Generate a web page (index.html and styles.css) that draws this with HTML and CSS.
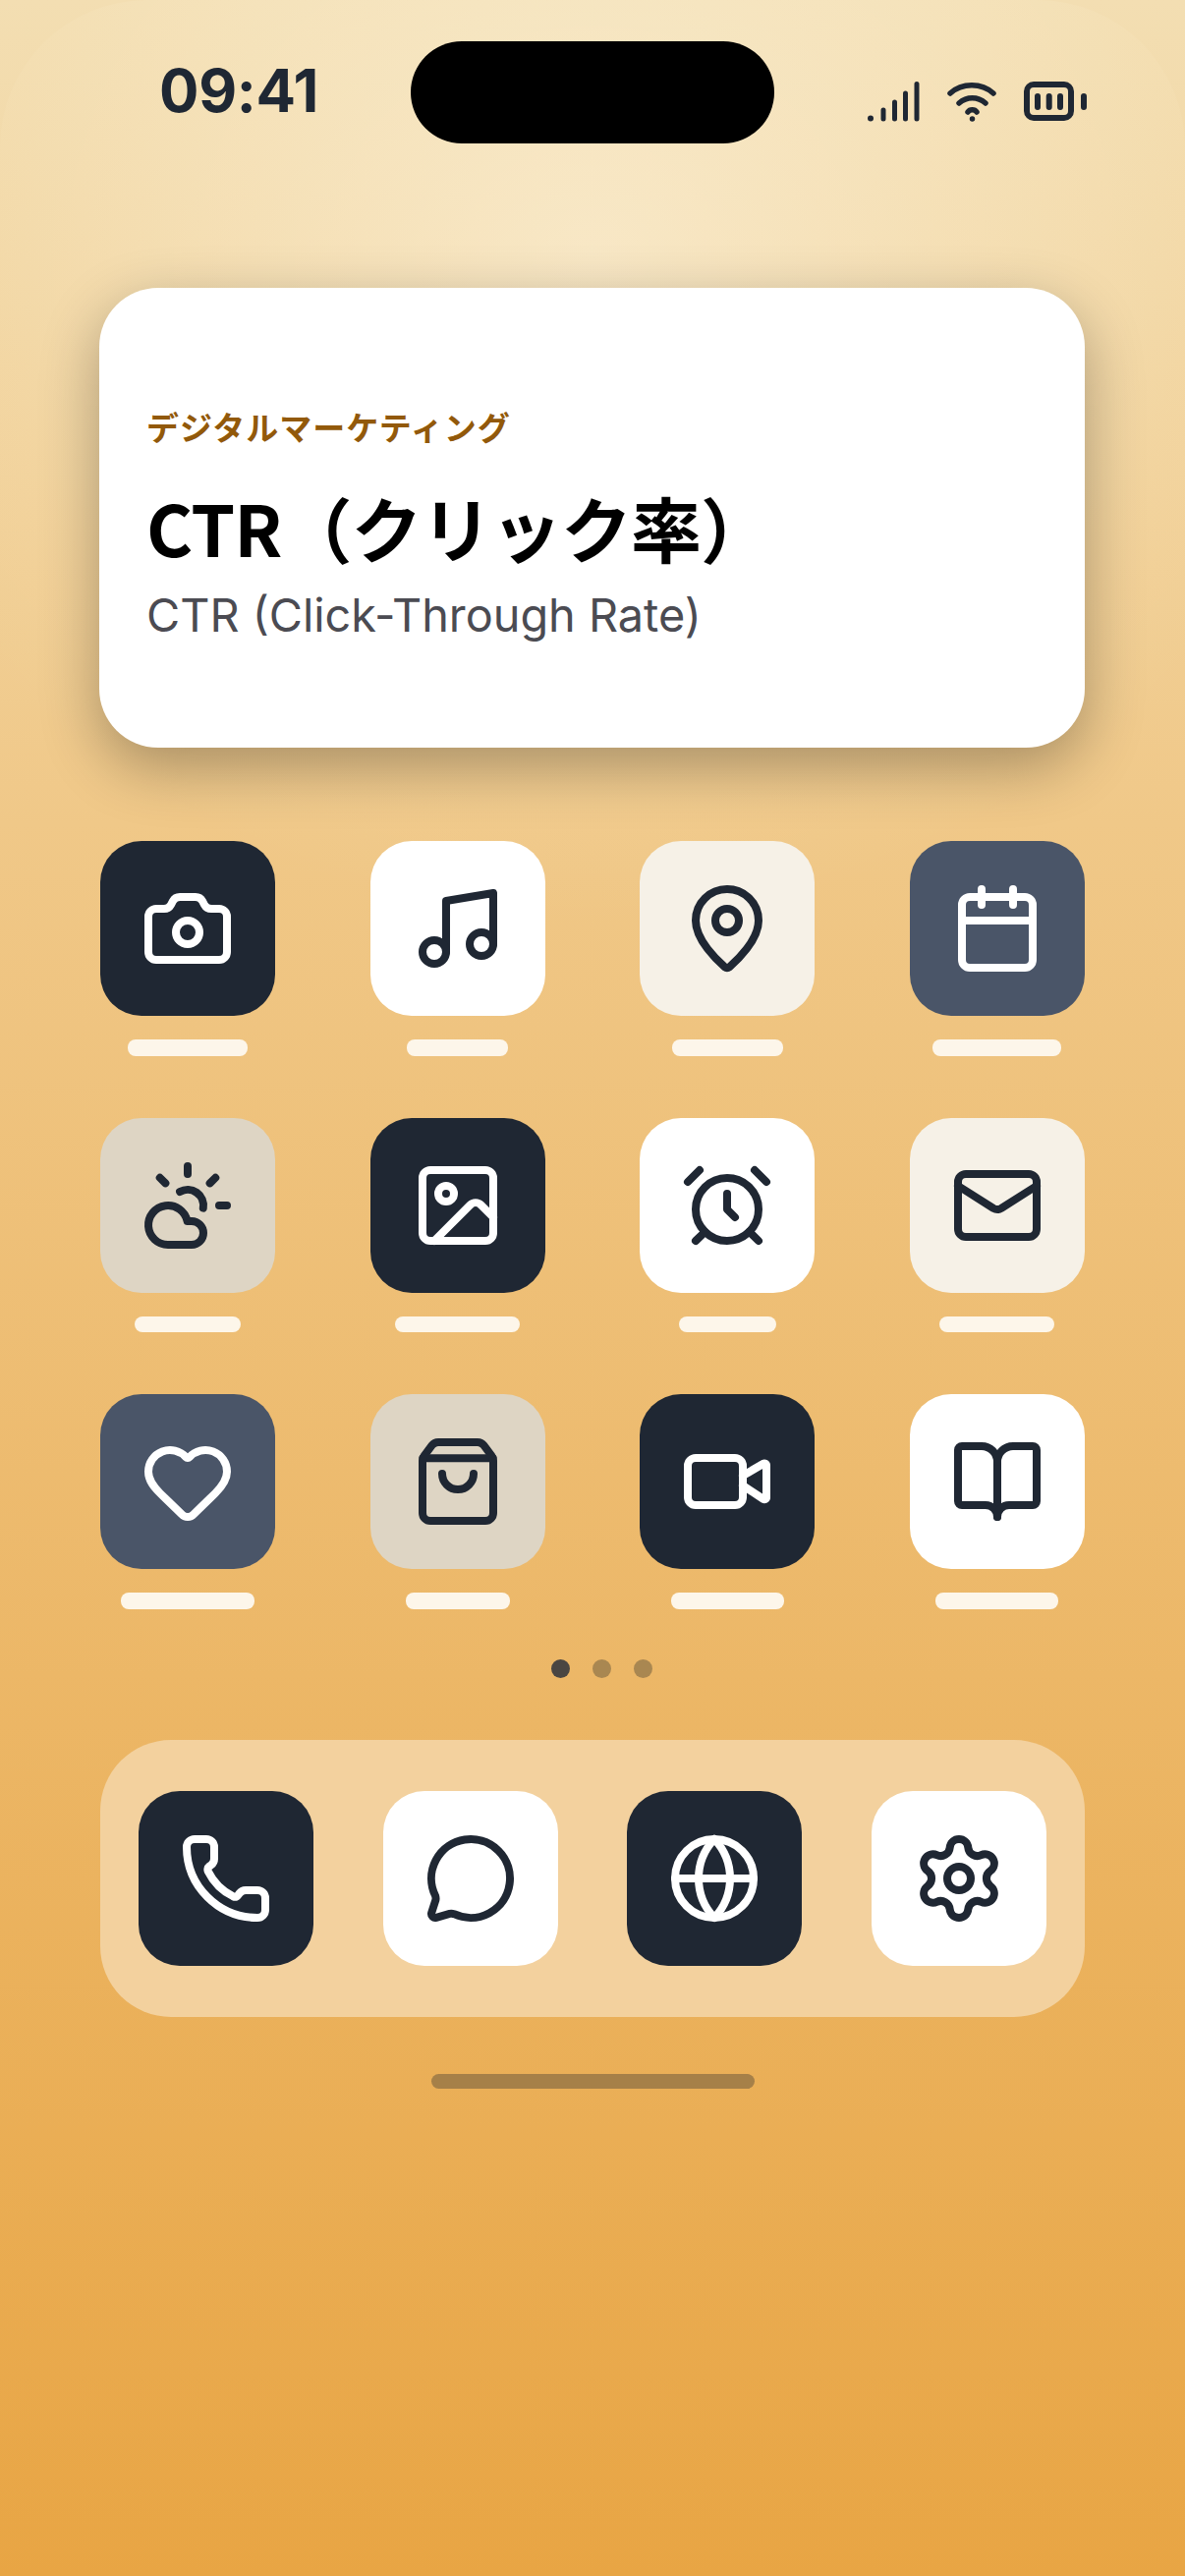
FILE: index.html
```html
<!DOCTYPE html>
<html lang="ja">
<head>
<meta charset="utf-8">
<title>CTR</title>
<link rel="stylesheet" href="styles.css">
</head>
<body>
<div class="screen">
  <div class="glow"></div>
  <header class="status">
    <span class="time">09:41</span>
    <div class="island"></div>
    <div class="status-icons">
      <svg class="s-signal" viewBox="883 80 55 46"><path class="dotline" d="M886 120.500v.01"/><path d="M899 112v9M910.500 104v17M921.500 95v26M933 85.500v35.500"/></svg>
      <svg class="s-wifi" viewBox="960 80 56 46"><path d="M966 95C978 84 998 84 1010 95M975 105C983 98 994 98 1002 105M984 114C986 111 991 111 993 114M988.500 121v.01"/></svg>
      <svg class="s-batt" viewBox="1040 80 70 46"><rect x="1045" y="86" width="45" height="34" rx="7"/><path d="M1056 98v11M1067.700 98v11M1079 98v11M1103 98v11"/></svg>
    </div>
  </header>
  <section class="card">
    <p class="eyebrow">デジタルマーケティング</p>
    <h1 class="title">CTR（クリック率）</h1>
    <p class="sub">CTR (Click-Through Rate)</p>
  </section>
  <main class="grid">
    <div class="app"><div class="tile dark"><svg viewBox="0 0 24 24"><path d="M13.997 4a2 2 0 0 1 1.760 1.050l.486.900A2 2 0 0 0 18.003 7H20a2 2 0 0 1 2 2v9a2 2 0 0 1-2 2H4a2 2 0 0 1-2-2V9a2 2 0 0 1 2-2h1.997a2 2 0 0 0 1.759-1.048l.489-.904A2 2 0 0 1 10.004 4z"/><circle cx="12" cy="13" r="3"/></svg></div><span class="lbl l122"></span></div>
    <div class="app"><div class="tile white"><svg viewBox="0 0 24 24"><path d="M9 18V5l12-2v13"/><circle cx="6" cy="18" r="3"/><circle cx="18" cy="16" r="3"/></svg></div><span class="lbl l103"></span></div>
    <div class="app"><div class="tile cream"><svg viewBox="0 0 24 24"><path d="M20 10c0 4.993-5.539 10.193-7.399 11.799a1 1 0 0 1-1.202 0C9.539 20.193 4 14.993 4 10a8 8 0 0 1 16 0"/><circle cx="12" cy="10" r="3"/></svg></div><span class="lbl l113"></span></div>
    <div class="app"><div class="tile slate"><svg viewBox="0 0 24 24"><rect x="3" y="4" width="18" height="18" rx="2"/><path d="M16 2v4M8 2v4M3 10h18"/></svg></div><span class="lbl l131"></span></div>

    <div class="app"><div class="tile sand"><svg viewBox="0 0 24 24"><path d="M12 2v2M4.930 4.930l1.410 1.410M20 12h2M19.070 4.930l-1.410 1.410M15.947 12.650a4 4 0 0 0-5.925-4.128"/><path d="M13 22H7a5 5 0 1 1 4.900-6H13a3 3 0 0 1 0 6Z"/></svg></div><span class="lbl l108"></span></div>
    <div class="app"><div class="tile dark"><svg viewBox="0 0 24 24"><rect x="3" y="3" width="18" height="18" rx="2"/><circle cx="9" cy="9" r="2"/><path d="m21 15-3.086-3.086a2 2 0 0 0-2.828 0L6 21"/></svg></div><span class="lbl l127"></span></div>
    <div class="app"><div class="tile white"><svg viewBox="0 0 24 24"><circle cx="12" cy="13" r="8"/><path d="M12 9v4l2 2M5 3 2 6M22 6l-3-3M6.380 18.700 4 21M17.640 18.670 20 21"/></svg></div><span class="lbl l99"></span></div>
    <div class="app"><div class="tile cream"><svg viewBox="0 0 24 24"><path d="m22 7-8.991 5.727a2 2 0 0 1-2.009 0L2 7"/><rect x="2" y="4" width="20" height="16" rx="2"/></svg></div><span class="lbl l117"></span></div>

    <div class="app"><div class="tile slate"><svg viewBox="0 0 24 24"><path d="M2 9.500a5.500 5.500 0 0 1 9.591-3.676.56.56 0 0 0 .818 0A5.490 5.490 0 0 1 22 9.500c0 2.290-1.500 4-3 5.500l-5.492 5.313a2 2 0 0 1-3 .019L5 15c-1.500-1.500-3-3.200-3-5.500"/></svg></div><span class="lbl l136"></span></div>
    <div class="app"><div class="tile sand"><svg viewBox="0 0 24 24"><path d="M16 10a4 4 0 0 1-8 0M3.103 6.034h17.794"/><path d="M3.400 5.467a2 2 0 0 0-.4 1.200V20a2 2 0 0 0 2 2h14a2 2 0 0 0 2-2V6.667a2 2 0 0 0-.4-1.200l-2-2.667A2 2 0 0 0 17 2H7a2 2 0 0 0-1.600.8z"/></svg></div><span class="lbl l106"></span></div>
    <div class="app"><div class="tile dark"><svg viewBox="0 0 24 24"><path d="m16 13 5.223 3.482a.5.5 0 0 0 .777-.416V7.870a.5.5 0 0 0-.752-.432L16 10.500"/><rect x="2" y="6" width="14" height="12" rx="2"/></svg></div><span class="lbl l115"></span></div>
    <div class="app"><div class="tile white"><svg viewBox="0 0 24 24"><path d="M12 7v14"/><path d="M3 18a1 1 0 0 1-1-1V4a1 1 0 0 1 1-1h5a4 4 0 0 1 4 4 4 4 0 0 1 4-4h5a1 1 0 0 1 1 1v13a1 1 0 0 1-1 1h-6a3 3 0 0 0-3 3 3 3 0 0 0-3-3z"/></svg></div><span class="lbl l125"></span></div>
  </main>
  <div class="dots"><i class="dot on"></i><i class="dot"></i><i class="dot"></i></div>
  <nav class="dock">
    <div class="tile dark"><svg viewBox="0 0 24 24"><path d="M13.832 16.568a1 1 0 0 0 1.213-.303l.355-.465A2 2 0 0 1 17 15h3a2 2 0 0 1 2 2v3a2 2 0 0 1-2 2A18 18 0 0 1 2 4a2 2 0 0 1 2-2h3a2 2 0 0 1 2 2v3a2 2 0 0 1-.8 1.600l-.468.351a1 1 0 0 0-.292 1.233 14 14 0 0 0 6.392 6.384"/></svg></div>
    <div class="tile white"><svg viewBox="0 0 24 24"><path d="M2.992 16.342a2 2 0 0 1 .094 1.167l-1.065 3.290a1 1 0 0 0 1.236 1.168l3.413-.998a2 2 0 0 1 1.099.092 10 10 0 1 0-4.777-4.719"/></svg></div>
    <div class="tile dark"><svg viewBox="0 0 24 24"><circle cx="12" cy="12" r="10"/><path d="M12 2a14.500 14.500 0 0 0 0 20 14.500 14.500 0 0 0 0-20M2 12h20"/></svg></div>
    <div class="tile white"><svg viewBox="0 0 24 24"><path d="M9.671 4.136a2.340 2.340 0 0 1 4.659 0 2.340 2.340 0 0 0 3.319 1.915 2.340 2.340 0 0 1 2.330 4.033 2.340 2.340 0 0 0 0 3.831 2.340 2.340 0 0 1-2.330 4.033 2.340 2.340 0 0 0-3.319 1.915 2.340 2.340 0 0 1-4.659 0 2.340 2.340 0 0 0-3.320-1.915 2.340 2.340 0 0 1-2.330-4.033 2.340 2.340 0 0 0 0-3.831A2.340 2.340 0 0 1 6.350 6.051a2.340 2.340 0 0 0 3.319-1.915"/><circle cx="12" cy="12" r="3"/></svg></div>
  </nav>
  <div class="home-bar"></div>
</div>
</body>
</html>
```
FILE: styles.css
```css
* { box-sizing: border-box; margin: 0; padding: 0; }
html, body { width: 1206px; height: 2622px; overflow: hidden; }
body { font-family: "Inter", "Noto Sans CJK JP", sans-serif; }
.screen {
  position: relative;
  width: 1206px;
  height: 2622px;
  padding: 0 102px;
  display: flex;
  flex-direction: column;
  align-items: stretch;
  background: linear-gradient(180deg, #f3deb2 0%, #f0c888 32%, #e8a544 100%);
}
.glow {
  position: absolute;
  left: 0; top: 0; right: 0;
  height: 950px;
  border-radius: 150px 150px 0 0;
  background: radial-gradient(ellipse 780px 680px at 603px 260px, rgba(255,250,235,.46), rgba(255,244,215,.08) 78%, rgba(255,244,215,0) 100%);
}
.status {
  position: relative;
  height: 293px;
  flex: none;
}
.time {
  position: absolute;
  left: 60px; top: 56px;
  font-size: 60px;
  line-height: 72px;
  font-weight: 700;
  letter-spacing: -.3px;
  color: #1f2733;
}
.island {
  position: absolute;
  left: 316px; top: 42px;
  width: 370px; height: 104px;
  border-radius: 52px;
  background: #000;
}
.status-icons {
  position: absolute;
  right: -6px; top: 80px;
  display: flex;
  align-items: center;
  gap: 23px;
}
.status-icons svg { height: 46px; fill: none; stroke: #1f2733; stroke-linecap: round; stroke-linejoin: round; stroke-width: 5; }
.s-signal { width: 55px; }
.s-signal .dotline { stroke-width: 6; }
.s-wifi { width: 56px; }
.s-wifi path { stroke-width: 5.5; }
.s-batt { width: 70px; }
.status-icons .s-batt { stroke-width: 6; }
.card {
  position: relative;
  flex: none;
  height: 468px;
  margin: 0 0 0 -1px;
  padding: 119px 48px 0;
  display: flex;
  flex-direction: column;
  background: #fff;
  border-radius: 60px;
  box-shadow: 0 20px 60px rgba(0,0,0,.3);
}
.eyebrow {
  font-family: "Noto Sans CJK JP", sans-serif;
  font-size: 33px;
  line-height: 44px;
  font-weight: 700;
  letter-spacing: 1px;
  color: #92590a;
  margin-bottom: 30px;
}
.title {
  font-family: "Noto Sans CJK JP", sans-serif;
  font-size: 72px;
  line-height: 100px;
  font-weight: 700;
  letter-spacing: -.9px;
  color: #000;
}
.sub {
  font-size: 46.8px;
  line-height: 60px;
  font-weight: 400;
  color: #4b4b52;
  margin-top: 10px;
}
.grid {
  position: relative;
  flex: none;
  margin-top: 95px;
  display: grid;
  grid-template-columns: repeat(4, 178px);
  justify-content: space-between;
  row-gap: 63px;
}
.app { display: flex; flex-direction: column; align-items: center; gap: 24px; }
.tile {
  width: 178px; height: 178px;
  flex: none;
  border-radius: 42px;
  display: flex;
  align-items: center;
  justify-content: center;
}
.tile svg { width: 96px; height: 96px; fill: none; stroke-width: 2; stroke-linecap: round; stroke-linejoin: round; stroke: #1f2733; }
.dark { background: #1f2733; }
.slate { background: #4a5568; }
.dark svg, .slate svg { stroke: #fff; }
.white { background: #fff; }
.cream { background: #f6f1e7; }
.sand { background: #ded5c4; }
.lbl { display: block; height: 16.5px; border-radius: 8px; background: #fdf6ea; }
.l122 { width: 122px; } .l103 { width: 103px; } .l113 { width: 113px; } .l131 { width: 131px; }
.l108 { width: 108px; } .l127 { width: 127px; } .l99 { width: 99px; } .l117 { width: 117px; }
.l136 { width: 136px; } .l106 { width: 106px; } .l115 { width: 115px; } .l125 { width: 125px; }
.dots {
  position: relative;
  flex: none;
  margin-top: 51.5px;
  padding-left: 18px;
  display: flex;
  justify-content: center;
  gap: 23px;
}
.dot { display: block; width: 19px; height: 19px; border-radius: 50%; background: #a98751; }
.dot.on { background: #4a4642; }
.dock {
  position: relative;
  flex: none;
  margin-top: 63px;
  height: 282px;
  padding: 0 39px;
  display: flex;
  align-items: center;
  justify-content: space-between;
  background: #f3d19e;
  border-radius: 72px;
}
.home-bar {
  position: relative;
  flex: none;
  width: 329px;
  height: 15px;
  margin: 58px auto 0;
  border-radius: 8px;
  background: #a68048;
}
```
